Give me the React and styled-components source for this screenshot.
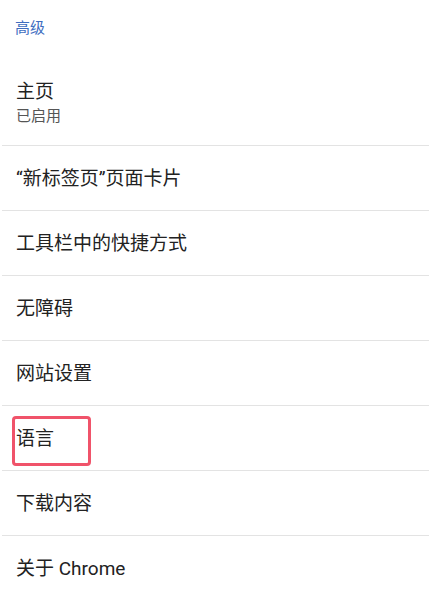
import React from 'react'
import styled, { createGlobalStyle } from 'styled-components'

const GlobalStyle = createGlobalStyle`
  body {
    margin: 0;
    background: #ffffff;
    font-family: Roboto, "Noto Sans CJK SC", sans-serif;
  }
`

const Page = styled.div`
  width: 429px;
  height: 592px;
  overflow: hidden;
  background: #ffffff;
`

const SectionTitle = styled.div`
  height: 52px;
  display: flex;
  align-items: center;
  padding-left: 15px;
  font-size: 15px;
  color: #3e6dbf;
`

const List = styled.ul`
  list-style: none;
  margin: 0;
  padding: 0;
`

const Row = styled.li`
  position: relative;
  display: flex;
  flex-direction: column;
  justify-content: ${props => props.tall ? 'flex-start' : 'center'};
  box-sizing: border-box;
  height: ${props => props.tall ? 94 : 65}px;
  padding-top: ${props => props.tall ? 28 : 1}px;
  margin-left: 2px;
  padding-left: 14px;
  border-bottom: ${props => props.last ? 'none' : '1px solid #e3e3e3'};
`

const Title = styled.span`
  font-size: 19px;
  line-height: 24px;
  color: #222222;
`

const Summary = styled.span`
  font-size: 15px;
  line-height: 24px;
  color: #555555;
`

const Highlight = styled.div`
  position: absolute;
  left: 10px;
  top: 10px;
  width: 79px;
  height: 50px;
  box-sizing: border-box;
  border: 3px solid #f0536a;
  border-radius: 4px;
  pointer-events: none;
`

const items = [
  '“新标签页”页面卡片',
  '工具栏中的快捷方式',
  '无障碍',
  '网站设置',
  '语言',
  '下载内容',
  '关于 Chrome'
]

export default function App() {
  return (
    <Page>
      <GlobalStyle />
      <SectionTitle>高级</SectionTitle>
      <List>
        <Row tall>
          <Title>主页</Title>
          <Summary>已启用</Summary>
        </Row>
        {items.map((label, i) => (
          <Row key={label} last={i === items.length - 1}>
            <Title>{label}</Title>
            {label === '语言' ? <Highlight /> : null}
          </Row>
        ))}
      </List>
    </Page>
  )
}
